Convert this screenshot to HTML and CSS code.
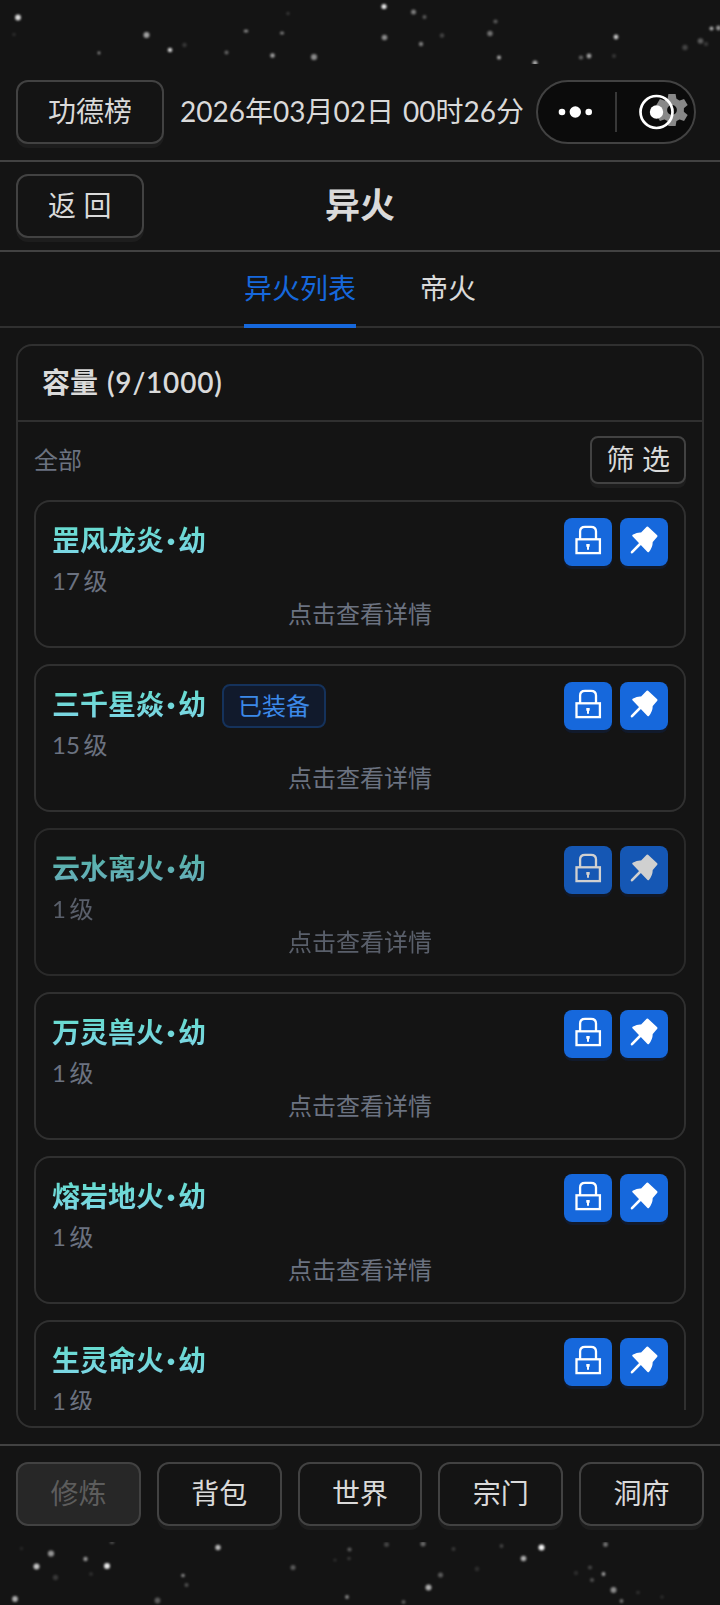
FILE: index.html
```html
<!DOCTYPE html>
<html lang="zh-CN">
<head>
  <meta charset="UTF-8">
  <meta name="viewport" content="width=device-width, initial-scale=1.0">
  <title>异火</title>
  <link rel="stylesheet" href="styles.css">
</head>
<body>
  <!-- Shared icons -->
  <svg class="sprite" width="0" height="0">
    <symbol id="icon-lock" viewBox="0 0 48 48">
      <path d="M16.1 21V13.5Q16.1 8.8 21 8.8H27Q32 8.8 32 13.5V21" fill="none" stroke="currentColor" stroke-width="2.3"/>
      <rect x="12.5" y="21.3" width="23.4" height="13.8" fill="none" stroke="currentColor" stroke-width="2.3"/>
      <path d="M22.3 26h3.4v2.4l-.7.6v2.8h-2v-2.8l-.7-.6z" fill="currentColor"/>
    </symbol>
    <symbol id="icon-pin" viewBox="0 0 48 48">
      <path d="M27.4 9.5L36.5 18L31.8 23.5Q31.6 29.5 28.2 33.2L13.2 17.6Q16.5 15.4 21.8 15.3Z" fill="currentColor" stroke="currentColor" stroke-width="2" stroke-linejoin="round"/>
      <path d="M21.5 24.5L12 34.2" stroke="currentColor" stroke-width="2.6" stroke-linecap="round"/>
    </symbol>
  </svg>

  <div class="app">
    <svg class="stars stars-top" viewBox="0 0 720 64">
      <circle cx="18" cy="17.5" r="2.9" opacity=".85"/>
      <circle cx="14" cy="34.5" r="1.8" opacity=".1"/>
      <circle cx="146.5" cy="35" r="3" opacity=".6"/>
      <circle cx="99" cy="53" r="1.4" opacity=".55"/>
      <circle cx="170" cy="50" r="2.3" opacity=".8"/>
      <circle cx="184.5" cy="45" r="2.2" opacity=".15"/>
      <circle cx="226.5" cy="52.5" r="2" opacity=".35"/>
      <ellipse cx="246" cy="31" rx="2.4" ry="1.5" opacity=".5"/>
      <circle cx="272.5" cy="55.5" r="2.3" opacity=".6"/>
      <ellipse cx="282" cy="33" rx="2.2" ry="1.6" opacity=".45"/>
      <circle cx="288" cy="13.5" r="1.7" opacity=".15"/>
      <circle cx="314" cy="57" r="3.1" opacity=".5"/>
      <circle cx="384" cy="6.5" r="2.6" opacity=".9"/>
      <circle cx="413.5" cy="12" r="2.5" opacity=".45"/>
      <circle cx="424.5" cy="17" r="2" opacity=".3"/>
      <circle cx="384.5" cy="37.5" r="2.8" opacity=".5"/>
      <circle cx="421" cy="44" r="2.2" opacity=".45"/>
      <circle cx="442" cy="35.5" r="2.2" opacity=".2"/>
      <circle cx="495.5" cy="21.5" r="2.1" opacity=".3"/>
      <circle cx="490" cy="33.5" r="2.7" opacity=".4"/>
      <circle cx="499" cy="57.5" r="2" opacity=".65"/>
      <circle cx="535" cy="63" r="2.5" opacity=".65"/>
      <circle cx="581" cy="57.5" r="2.1" opacity=".35"/>
      <circle cx="589" cy="56" r="2.4" opacity=".6"/>
      <circle cx="614" cy="56" r="2" opacity=".15"/>
      <circle cx="616" cy="37" r="2.4" opacity=".75"/>
      <circle cx="685" cy="47.5" r="2.7" opacity=".2"/>
      <circle cx="700.5" cy="41" r="2.8" opacity=".3"/>
      <circle cx="706" cy="44" r="2.2" opacity=".15"/>
      <circle cx="711.5" cy="28.5" r="2" opacity=".65"/>
      <circle cx="718.5" cy="28" r="2.4" opacity=".55"/>
    </svg>

    <header class="topbar">
      <button class="btn">功德榜</button>
      <div class="clock">2026年03月02日 00时26分</div>
      <svg class="capsule" viewBox="0 0 160 64">
        <rect x="1" y="1" width="158" height="62" rx="31" fill="#0b0b0b" stroke="#424242" stroke-width="2"/>
        <circle cx="26" cy="32" r="3.3" fill="#fff"/>
        <circle cx="39.3" cy="32" r="5.7" fill="#fff"/>
        <circle cx="52.7" cy="32" r="3.3" fill="#fff"/>
        <path d="M80 12V52" stroke="#383838" stroke-width="2"/>
        <!-- settings gear -->
        <g transform="translate(136 30)">
          <circle r="8.4" fill="none" stroke="#888" stroke-width="7"/>
          <g fill="#888">
            <path id="tooth" d="M-4.6 -10L-3.6 -16H3.6L4.6 -10Z"/>
            <use href="#tooth" transform="rotate(60)"/>
            <use href="#tooth" transform="rotate(120)"/>
            <use href="#tooth" transform="rotate(180)"/>
            <use href="#tooth" transform="rotate(240)"/>
            <use href="#tooth" transform="rotate(300)"/>
          </g>
        </g>
        <circle cx="120.5" cy="32" r="16" fill="none" stroke="#fff" stroke-width="2.7"/>
        <circle cx="120.5" cy="32" r="6.7" fill="#fff"/>
      </svg>
    </header>

    <div class="page-header">
      <button class="btn">返 回</button>
      <h1>异火</h1>
    </div>

    <nav class="tabs">
      <div class="tab active">异火列表</div>
      <div class="tab">帝火</div>
    </nav>

    <main class="panel">
      <h2 class="panel-title">容量 <span class="count">(9/1000)</span></h2>
      <div class="panel-body">
        <div class="filter">
          <span class="filter-label">全部</span>
          <button class="btn btn-small">筛 选</button>
        </div>
        <div class="list">
          <div class="item">
            <div class="item-head">
              <div>
                <div class="item-title"><span class="name">罡风龙炎<i>·</i>幼</span></div>
                <div class="level">17 级</div>
              </div>
              <div class="actions">
                <button class="icon-btn"><svg><use href="#icon-lock"/></svg></button>
                <button class="icon-btn"><svg><use href="#icon-pin"/></svg></button>
              </div>
            </div>
            <div class="hint">点击查看详情</div>
          </div>
          <div class="item">
            <div class="item-head">
              <div>
                <div class="item-title"><span class="name">三千星焱<i>·</i>幼</span><span class="tag">已装备</span></div>
                <div class="level">15 级</div>
              </div>
              <div class="actions">
                <button class="icon-btn"><svg><use href="#icon-lock"/></svg></button>
                <button class="icon-btn"><svg><use href="#icon-pin"/></svg></button>
              </div>
            </div>
            <div class="hint">点击查看详情</div>
          </div>
          <div class="item pressed">
            <div class="item-head">
              <div>
                <div class="item-title"><span class="name">云水离火<i>·</i>幼</span></div>
                <div class="level">1 级</div>
              </div>
              <div class="actions">
                <button class="icon-btn"><svg><use href="#icon-lock"/></svg></button>
                <button class="icon-btn"><svg><use href="#icon-pin"/></svg></button>
              </div>
            </div>
            <div class="hint">点击查看详情</div>
          </div>
          <div class="item">
            <div class="item-head">
              <div>
                <div class="item-title"><span class="name">万灵兽火<i>·</i>幼</span></div>
                <div class="level">1 级</div>
              </div>
              <div class="actions">
                <button class="icon-btn"><svg><use href="#icon-lock"/></svg></button>
                <button class="icon-btn"><svg><use href="#icon-pin"/></svg></button>
              </div>
            </div>
            <div class="hint">点击查看详情</div>
          </div>
          <div class="item">
            <div class="item-head">
              <div>
                <div class="item-title"><span class="name">熔岩地火<i>·</i>幼</span></div>
                <div class="level">1 级</div>
              </div>
              <div class="actions">
                <button class="icon-btn"><svg><use href="#icon-lock"/></svg></button>
                <button class="icon-btn"><svg><use href="#icon-pin"/></svg></button>
              </div>
            </div>
            <div class="hint">点击查看详情</div>
          </div>
          <div class="item">
            <div class="item-head">
              <div>
                <div class="item-title"><span class="name">生灵命火<i>·</i>幼</span></div>
                <div class="level">1 级</div>
              </div>
              <div class="actions">
                <button class="icon-btn"><svg><use href="#icon-lock"/></svg></button>
                <button class="icon-btn"><svg><use href="#icon-pin"/></svg></button>
              </div>
            </div>
          </div>
        </div>
      </div>
    </main>

    <footer class="navbar">
      <button class="btn" disabled>修炼</button>
      <button class="btn">背包</button>
      <button class="btn">世界</button>
      <button class="btn">宗门</button>
      <button class="btn">洞府</button>
    </footer>

    <svg class="stars stars-bottom" viewBox="0 0 720 63">
      <ellipse cx="112" cy="0.5" rx="2.4" ry="1.2" opacity=".3"/>
      <circle cx="51" cy="11.5" r="3.1" opacity=".55"/>
      <circle cx="36.5" cy="24.5" r="3" opacity=".75"/>
      <circle cx="85.5" cy="17" r="2.2" opacity=".55"/>
      <circle cx="107" cy="24" r="3" opacity=".9"/>
      <circle cx="55.5" cy="35.5" r="2.7" opacity=".15"/>
      <circle cx="91" cy="32" r="2.1" opacity=".1"/>
      <circle cx="15" cy="57" r="2.9" opacity=".65"/>
      <circle cx="21.5" cy="6.5" r="1.7" opacity=".08"/>
      <circle cx="157.5" cy="58.5" r="2.9" opacity=".3"/>
      <circle cx="183" cy="33.5" r="1.8" opacity=".5"/>
      <circle cx="186.5" cy="43" r="2" opacity=".25"/>
      <circle cx="218" cy="5.5" r="2.7" opacity=".7"/>
      <circle cx="293" cy="25.5" r="2.5" opacity=".3"/>
      <circle cx="335" cy="18" r="1.6" opacity=".12"/>
      <circle cx="349.5" cy="7.5" r="2.1" opacity=".3"/>
      <circle cx="349" cy="16.5" r="1.8" opacity=".15"/>
      <circle cx="347" cy="55" r="1.9" opacity=".5"/>
      <circle cx="386.5" cy="2.5" r="2.5" opacity=".2"/>
      <circle cx="423" cy="1.8" r="2.6" opacity=".35"/>
      <circle cx="453.5" cy="7" r="2" opacity=".15"/>
      <circle cx="440.5" cy="33" r="2.5" opacity=".3"/>
      <circle cx="428.5" cy="45.5" r="3" opacity=".65"/>
      <circle cx="403.5" cy="60" r="2" opacity=".3"/>
      <circle cx="477" cy="27" r="2.4" opacity=".1"/>
      <circle cx="501.5" cy="4" r="1.9" opacity=".2"/>
      <circle cx="523.5" cy="16.5" r="2.8" opacity=".65"/>
      <circle cx="541.5" cy="5.5" r="3" opacity=".95"/>
      <circle cx="605.5" cy="2.5" r="2.4" opacity=".4"/>
      <circle cx="590" cy="25.5" r="2.1" opacity=".2"/>
      <circle cx="576" cy="31" r="2.2" opacity=".1"/>
      <circle cx="603.5" cy="32" r="1.9" opacity=".6"/>
      <circle cx="592" cy="38" r="2.1" opacity=".25"/>
      <circle cx="613.5" cy="48" r="3" opacity=".5"/>
      <circle cx="621.5" cy="59" r="1.9" opacity=".4"/>
      <circle cx="638" cy="50.5" r="1.8" opacity=".12"/>
      <circle cx="662" cy="55" r="1.8" opacity=".1"/>
    </svg>
  </div>
</body>
</html>
```
FILE: styles.css
```css
* {
  box-sizing: border-box;
}
body {
  margin: 0;
  background: #141414;
  color: rgba(255, 255, 255, 0.85);
  font-family: Lato, "Noto Sans CJK SC", sans-serif;
  font-size: 28px;
}
h1, h2 {
  margin: 0;
}
.sprite {
  display: none;
}
.app {
  display: flex;
  flex-direction: column;
  height: 1605px;
  overflow: hidden;
}
.stars {
  display: block;
  width: 720px;
  fill: #fff;
  flex: none;
}
.stars circle, .stars ellipse {
  filter: blur(0.8px);
}
.stars-top {
  height: 64px;
}
.stars-bottom {
  height: 63px;
}

/* buttons */
.btn {
  height: 64px;
  padding: 0 30px 2px;
  border: 2px solid #424242;
  border-radius: 12px;
  background: #141414;
  box-shadow: 0 4px 0 rgba(255, 255, 255, 0.04);
  color: inherit;
  font: inherit;
  line-height: 56px;
  word-spacing: 0.4px;
  white-space: nowrap;
}
.btn:disabled {
  background: #272727;
  box-shadow: none;
  color: rgba(255, 255, 255, 0.25);
}
.btn-small {
  height: 48px;
  padding: 0 14px 2px;
  border-radius: 8px;
  line-height: 40px;
}

/* top */
.topbar {
  display: flex;
  align-items: center;
  height: 98px;
  padding: 0 24px 0 16px;
  border-bottom: 2px solid #424242;
}
.clock {
  flex: 1;
  margin-left: 16px;
  line-height: 44px;
  padding-bottom: 2px;
  word-spacing: 2px;
  white-space: nowrap;
}
.capsule {
  width: 160px;
  height: 64px;
  flex: none;
}
.page-header {
  display: grid;
  grid-template-columns: 1fr auto 1fr;
  align-items: center;
  height: 90px;
  padding: 0 16px;
  border-bottom: 2px solid #424242;
}
.page-header .btn {
  justify-self: start;
}
.page-header h1 {
  padding-bottom: 4px;
  font-size: 35px;
  line-height: 50px;
}
.tabs {
  display: flex;
  justify-content: center;
  gap: 64px;
  height: 76px;
  box-shadow: inset 0 -2px 0 #303030;
}
.tab {
  line-height: 72px;
}
.tab.active {
  color: #1668dc;
  border-bottom: 4px solid #1668dc;
}

/* panel */
.panel {
  display: flex;
  flex-direction: column;
  height: 1084px;
  margin: 16px 16px;
  border: 2px solid #303030;
  border-radius: 16px;
}
.panel-title {
  flex: none;
  height: 76px;
  padding: 0 24px;
  border-bottom: 2px solid #303030;
  font-size: 28px;
  font-weight: 600;
  line-height: 72px;
  word-spacing: 2px;
}
.count {
  letter-spacing: 0.8px;
}
.panel-body {
  flex: 1;
  min-height: 0;
  display: flex;
  flex-direction: column;
  padding: 14px 16px 16px;
}
.filter {
  display: flex;
  flex: none;
  align-items: center;
  justify-content: space-between;
  margin-bottom: 16px;
  color: #6b7280;
  font-size: 24px;
}
.filter-label {
  padding-bottom: 4px;
}
.filter .btn {
  color: rgba(255, 255, 255, 0.85);
  font-size: 28px;
}
.list {
  flex: 1;
  min-height: 0;
  display: flex;
  flex-direction: column;
  gap: 16px;
  overflow: hidden;
}
.item {
  flex: none;
  height: 148px;
  padding: 16px;
  border: 2px solid #303030;
  border-radius: 16px;
}
.item.pressed {
  opacity: 0.8;
}
.item-head {
  display: flex;
  justify-content: space-between;
  height: 82px;
}
.item-title {
  display: flex;
  align-items: center;
  gap: 16px;
  height: 44px;
}
.name {
  background: linear-gradient(#68dbd0 25%, #7ad6e2 75%);
  -webkit-background-clip: text;
  background-clip: text;
  color: transparent;
  font-weight: 700;
  line-height: 46px;
}
.name i {
  display: inline-block;
  width: 14px;
  font-size: 32px;
  font-style: normal;
  font-weight: 900;
  line-height: 28px;
  text-align: center;
}
.tag {
  height: 44px;
  margin-top: 4px;
  padding: 0 14px;
  border: 2px solid #15325b;
  border-radius: 8px;
  background: #111a2c;
  color: #3c89e8;
  font-size: 24px;
  line-height: 40px;
}
.level, .hint {
  color: #6b7280;
  font-size: 24px;
}
.level {
  line-height: 38px;
  word-spacing: -2.5px;
}
.hint {
  line-height: 27px;
  text-align: center;
}
.actions {
  display: flex;
  gap: 8px;
}
.icon-btn {
  width: 48px;
  height: 48px;
  padding: 0;
  border: none;
  border-radius: 8px;
  background: #1668dc;
  box-shadow: 0 3px 0 #111a2c;
  color: #fff;
}
.icon-btn svg {
  display: block;
  width: 48px;
  height: 48px;
}

/* bottom */
.navbar {
  display: flex;
  gap: 16px;
  height: 98px;
  padding: 16px 16px 0;
  border-top: 2px solid #424242;
}
.navbar .btn {
  flex: 1;
}
```
